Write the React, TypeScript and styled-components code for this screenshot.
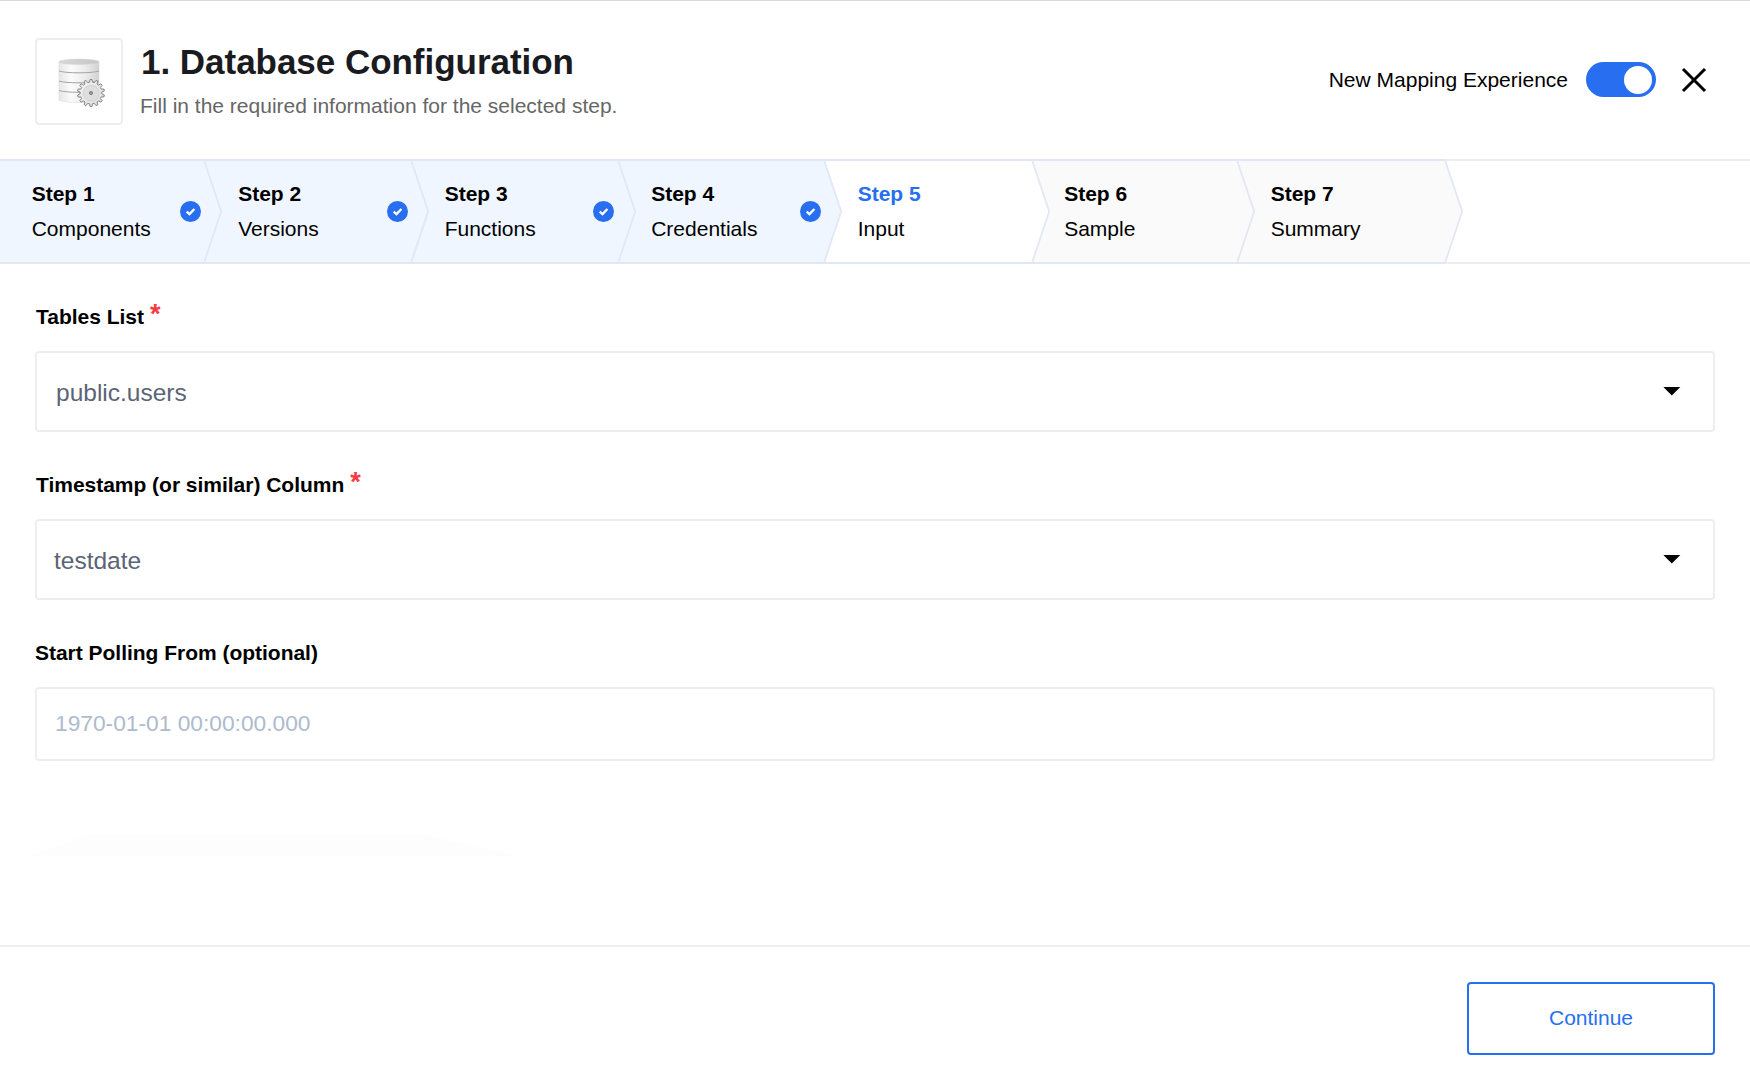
import React from "react";
import styled, { createGlobalStyle } from "styled-components";

const blue = "#276ef1";

const GlobalStyle = createGlobalStyle`
  * { box-sizing: border-box; }
  body {
    margin: 0;
    background: #fff;
    color: #000;
    font-family: "Liberation Sans", Arial, sans-serif;
    font-size: 21px;
    line-height: 24px;
  }
`;

const Page = styled.div`
  display: flex;
  flex-direction: column;
  height: 1088px;
  border-top: 1px solid #d9d9de;
  overflow: hidden;
`;

const Header = styled.header`
  display: flex;
  align-items: flex-start;
  height: 158px;
  padding: 37px 43px 0 35px;
`;

const IconBox = styled.div`
  display: flex;
  width: 88px;
  height: 87px;
  padding: 18px 0 0 21px;
  border: 2px solid #eee;
  border-radius: 4px;
`;

const Heading = styled.div`
  flex: 1;
  padding: 4px 0 0 17px;
`;

const Title = styled.h1`
  margin: 0 0 0 1px;
  color: #191b20;
  font-size: 35px;
  line-height: 40px;
  letter-spacing: -0.03px;
`;

const Subtitle = styled.p`
  margin: 12px 0 0;
  color: #666;
`;

const Actions = styled.div`
  display: flex;
  align-items: center;
  height: 35px;
  margin-top: 24px;
`;

const Toggle = styled.button`
  display: flex;
  justify-content: flex-end;
  width: 70px;
  height: 35px;
  margin: 0 25px 0 18px;
  padding: 4px;
  border: 0;
  border-radius: 18px;
  background: ${blue};
`;

const Knob = styled.span`
  width: 28px;
  height: 28px;
  border-radius: 50%;
  background: #fff;
`;

const CloseButton = styled.button`
  display: flex;
  padding: 0;
  border: 0;
  background: none;
`;

const Steps = styled.nav`
  display: flex;
  height: 105px;
`;

const StepsRest = styled.div`
  flex: 1;
  border: solid #eee;
  border-width: 2px 0;
`;

type StepState = "done" | "active" | "todo";
const stepFill: Record<StepState, string> = {
  done: "#eff6ff",
  active: "#fff",
  todo: "#fafafa",
};

const StepCell = styled.div<{ $state: StepState; $index: number }>`
  position: relative;
  z-index: ${(p) => 10 - p.$index};
  display: flex;
  align-items: center;
  width: 206.5px;
  padding-left: 31.7px;
  border: solid #e1e7f5;
  border-width: 2px 0;
  background: ${(p) => stepFill[p.$state]};
`;

const StepText = styled.div`
  flex: 1;
  padding-bottom: 1px;
`;

const StepName = styled.div<{ $active: boolean }>`
  margin-bottom: 11px;
  color: ${(p) => (p.$active ? blue : "#000")};
  font-weight: 700;
`;

const CheckSlot = styled.div`
  display: flex;
  margin: 0 5.3px 0 0;
`;

const ChevronSvg = styled.svg<{ $left: number }>`
  position: absolute;
  top: 0;
  left: ${(p) => p.$left}px;
`;

const Form = styled.main`
  display: flex;
  flex-direction: column;
  height: 681px;
  padding: 41px 35px 0;
`;

const Label = styled.label<{ $inset: number }>`
  display: flex;
  height: 46px;
  padding-left: ${(p) => p.$inset}px;
  font-weight: 700;
  letter-spacing: -0.02px;
`;

const Required = styled.span`
  margin-left: 6px;
  color: #f83a40;
  font-size: 27px;
  line-height: 18px;
`;

const SelectBox = styled.div<{ $inset: number }>`
  display: flex;
  align-items: center;
  justify-content: space-between;
  height: 81px;
  margin-bottom: 41px;
  padding: 2px 32px 0 ${(p) => p.$inset}px;
  border: 2px solid #eee;
  border-radius: 4px;
  color: #5b6475;
  font-size: 24.5px;
`;

const Input = styled.input`
  height: 74px;
  padding: 0 18px 2px;
  border: 2px solid #eee;
  border-radius: 4px;
  background: transparent;
  font-family: inherit;
  font-size: 22.75px;
  &::placeholder {
    color: #adbbcd;
    opacity: 1;
  }
`;

const Shade = styled.div`
  width: 491px;
  height: 22px;
  margin: 73px 0 0 -7px;
  background: #fdfdfd;
  clip-path: polygon(0 100%, 13% 0, 80% 0, 100% 100%);
`;

const Footer = styled.footer`
  display: flex;
  justify-content: flex-end;
  align-items: flex-start;
  flex: 1;
  padding: 35px 35px 0;
  border-top: 2px solid #eee;
`;

const ContinueButton = styled.button`
  width: 248px;
  height: 73px;
  padding: 0 0 2px;
  border: 2px solid ${blue};
  border-radius: 4px;
  background: #fff;
  color: ${blue};
  font: inherit;
`;

const gearPath = (() => {
  const teeth = 14;
  const pts: string[] = [];
  for (let i = 0; i < teeth; i++) {
    const a = (i / teeth) * Math.PI * 2 - Math.PI / 2;
    const w = (Math.PI * 2) / teeth;
    [
      [-0.31, 10.9],
      [-0.17, 13.5],
      [0.17, 13.5],
      [0.31, 10.9],
    ].forEach(([o, r]) => {
      pts.push(`${(33 + Math.cos(a + o * w) * r).toFixed(2)},${(35 + Math.sin(a + o * w) * r).toFixed(2)}`);
    });
  }
  return `M${pts.join("L")}Z`;
})();

const DatabaseIcon = () => (
  <svg width="50" height="50" viewBox="0 0 50 50">
    <defs>
      <linearGradient id="body" x1="0" x2="1">
        <stop offset="0" stopColor="#e6e6e6" />
        <stop offset="0.3" stopColor="#fbfbfb" />
        <stop offset="0.65" stopColor="#ececec" />
        <stop offset="1" stopColor="#d2d2d2" />
      </linearGradient>
      <linearGradient id="lid" x1="0" x2="1">
        <stop offset="0" stopColor="#d8d8d8" />
        <stop offset="1" stopColor="#c6c6c6" />
      </linearGradient>
      <linearGradient id="gear" x1="0" y1="0" x2="1" y2="1">
        <stop offset="0" stopColor="#f6f6f6" />
        <stop offset="1" stopColor="#dadada" />
      </linearGradient>
    </defs>
    <path d="M1 4V42Q6 44.5 21 44.5T41 42V4Z" fill="url(#body)" stroke="#dadada" strokeWidth=".6" />
    <ellipse cx="21" cy="3.8" rx="20" ry="2.7" fill="url(#lid)" stroke="#d0d0d0" strokeWidth=".5" />
    <g fill="none" stroke="#a5a5a5" strokeWidth="1">
      <path d="M1 13Q7 14.8 21 14.8T41 13" />
      <path d="M1 23Q7 24.8 21 24.8T41 23" />
      <path d="M1 32.5Q7 34.3 21 34.3T41 32.5" />
    </g>
    <path d={gearPath} fill="url(#gear)" stroke="#858585" strokeWidth="1" strokeLinejoin="round" />
    <circle cx="33" cy="35" r="8" fill="#dedede" stroke="#cbcbcb" strokeWidth=".6" />
    <circle cx="33" cy="35" r="1.5" fill="#b5b5b5" stroke="#707070" strokeWidth="1" />
  </svg>
);

const CloseIcon = () => (
  <svg width="26" height="26" viewBox="0 0 26 26" stroke="#000" strokeWidth="3" fill="none">
    <path d="M2 2L24 24M24 2L2 24" />
  </svg>
);

const CheckIcon = () => (
  <svg width="21" height="21" viewBox="0 0 21 21">
    <circle cx="10.5" cy="10.5" r="10.5" fill={blue} />
    <path d="M6.7 10.6L9.5 13.1L14.4 8" fill="none" stroke="#fff" strokeWidth="2.3" />
  </svg>
);

const Chevron = ({ fill, left }: { fill: string; left: number }) => (
  <ChevronSvg $left={left} width="20" height="101" viewBox="0 0 20 101">
    <path d="M0 0H1.3L18.2 50.5L1.3 101H0Z" fill={fill} />
    <path d="M1.3 0L18.2 50.5L1.3 101" fill="none" stroke="#e1e7f5" strokeWidth="1.75" />
  </ChevronSvg>
);

const Caret = () => (
  <svg width="18" height="13" viewBox="0 0 18 13">
    <path d="M.3 .9H17.3L8.8 9.6Z" fill="#000" />
  </svg>
);

const steps: { label: string; state: StepState; edge: number }[] = [
  { label: "Components", state: "done", edge: 203 },
  { label: "Versions", state: "done", edge: 203.5 },
  { label: "Functions", state: "done", edge: 203.5 },
  { label: "Credentials", state: "done", edge: 203.5 },
  { label: "Input", state: "active", edge: 205 },
  { label: "Sample", state: "todo", edge: 203.5 },
  { label: "Summary", state: "todo", edge: 205 },
];

export default function App() {
  return (
    <>
      <GlobalStyle />
      <Page>
        <Header>
          <IconBox>
            <DatabaseIcon />
          </IconBox>
          <Heading>
            <Title>1. Database Configuration</Title>
            <Subtitle>Fill in the required information for the selected step.</Subtitle>
          </Heading>
          <Actions>
            <span>New Mapping Experience</span>
            <Toggle role="switch" aria-checked="true">
              <Knob />
            </Toggle>
            <CloseButton aria-label="Close">
              <CloseIcon />
            </CloseButton>
          </Actions>
        </Header>
        <Steps>
          {steps.map((step, i) => (
            <StepCell key={step.label} $state={step.state} $index={i}>
              <StepText>
                <StepName $active={step.state === "active"}>Step {i + 1}</StepName>
                <div>{step.label}</div>
              </StepText>
              {step.state === "done" && (
                <CheckSlot>
                  <CheckIcon />
                </CheckSlot>
              )}
              <Chevron fill={stepFill[step.state]} left={step.edge} />
            </StepCell>
          ))}
          <StepsRest />
        </Steps>
        <Form>
          <Label $inset={1}>
            Tables List<Required>*</Required>
          </Label>
          <SelectBox $inset={19}>
            public.users
            <Caret />
          </SelectBox>
          <Label $inset={1}>
            Timestamp (or similar) Column<Required>*</Required>
          </Label>
          <SelectBox $inset={17}>
            testdate
            <Caret />
          </SelectBox>
          <Label $inset={0} htmlFor="start">
            Start Polling From (optional)
          </Label>
          <Input id="start" placeholder="1970-01-01 00:00:00.000" />
          <Shade />
        </Form>
        <Footer>
          <ContinueButton>Continue</ContinueButton>
        </Footer>
      </Page>
    </>
  );
}
